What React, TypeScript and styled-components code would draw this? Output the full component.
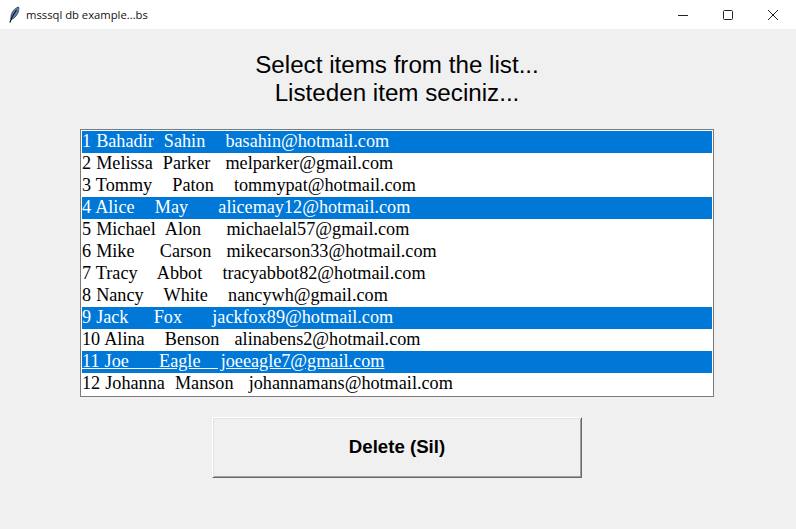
import React from "react";
import styled, { createGlobalStyle } from "styled-components";

const people = [
	{ text: "1 Bahadir  Sahin    basahin@hotmail.com", selected: true },
	{ text: "2 Melissa  Parker   melparker@gmail.com" },
	{ text: "3 Tommy    Paton    tommypat@hotmail.com" },
	{ text: "4 Alice    May      alicemay12@hotmail.com", selected: true },
	{ text: "5 Michael  Alon     michaelal57@gmail.com" },
	{ text: "6 Mike     Carson   mikecarson33@hotmail.com" },
	{ text: "7 Tracy    Abbot    tracyabbot82@hotmail.com" },
	{ text: "8 Nancy    White    nancywh@gmail.com" },
	{ text: "9 Jack     Fox      jackfox89@hotmail.com", selected: true },
	{ text: "10 Alina    Benson   alinabens2@hotmail.com" },
	{ text: "11 Joe      Eagle    joeeagle7@gmail.com", selected: true, active: true },
	{ text: "12 Johanna  Manson   johannamans@hotmail.com" },
];

export default function App() {
	return (
		<Root>
			<GlobalStyle />
			<TitleBar>
				<Feather width="16" height="18" viewBox="0 0 16 18">
					<path d="M12.5 1 C8.5 2.5 5.5 6 5 10.5 L4.8 13.5 C8 13 11 9.5 12.2 6 C12.9 4 13 2.3 12.5 1 Z" fill="#5f86bb" stroke="#2c3c52" strokeWidth="0.9" />
					<path d="M10.5 4 C8 7.5 5.5 11.5 3.8 16.5" fill="none" stroke="#111" strokeWidth="1.2" />
				</Feather>
				<WindowTitle>msssql db example...bs</WindowTitle>
				<WindowControls>
					<ControlButton>
						<svg width="12" height="12" viewBox="0 0 12 12">
							<path d="M1 6.5 H11" stroke="#222" strokeWidth="1" />
						</svg>
					</ControlButton>
					<ControlButton>
						<svg width="12" height="12" viewBox="0 0 12 12">
							<rect x="1.5" y="1.5" width="9" height="9" rx="1" fill="none" stroke="#222" strokeWidth="1" />
						</svg>
					</ControlButton>
					<ControlButton>
						<svg width="12" height="12" viewBox="0 0 12 12">
							<path d="M1 1 L11 11 M11 1 L1 11" stroke="#222" strokeWidth="1" />
						</svg>
					</ControlButton>
				</WindowControls>
			</TitleBar>
			<Content>
				<Heading>
					Select items from the list...
					<br />
					Listeden item seciniz...
				</Heading>
				<ListBox>
					{people.map((p) => (
						<ListRow key={p.text} $selected={p.selected} $active={p.active}>
							<span>{p.text}</span>
						</ListRow>
					))}
				</ListBox>
				<DeleteButton>Delete (Sil)</DeleteButton>
			</Content>
		</Root>
	);
}

const GlobalStyle = createGlobalStyle`
	html, body {
		margin: 0;
		padding: 0;
		background: #f0f0f0;
	}
`;

const Root = styled.div`
	width: 796px;
	height: 529px;
	overflow: hidden;
	display: flex;
	flex-direction: column;
	background: #f0f0f0;
`;

const TitleBar = styled.div`
	height: 29px;
	flex: none;
	display: flex;
	align-items: center;
	background: #fff;
	padding-left: 6px;
`;

const Feather = styled.svg`
	flex: none;
`;

const WindowTitle = styled.span`
	margin-left: 4px;
	font: 11.25px "Open Sans", "Liberation Sans", sans-serif;
	color: #111;
`;

const WindowControls = styled.div`
	display: flex;
	margin-left: auto;
	margin-right: 1px;
`;

const ControlButton = styled.div`
	width: 45px;
	height: 29px;
	display: flex;
	align-items: center;
	justify-content: center;
`;

const Content = styled.div`
	flex: 1;
	display: flex;
	flex-direction: column;
	align-items: center;
	padding-top: 22px;
	padding-right: 2px;
`;

const Heading = styled.div`
	font: 24.2px/28px "Liberation Sans", Arial, sans-serif;
	color: #000;
	text-align: center;
	white-space: pre;
`;

const ListBox = styled.div`
	width: 634px;
	height: 268px;
	box-sizing: border-box;
	margin-top: 22px;
	padding: 1px;
	border: 1px solid #7a7a7a;
	background: #fff;
`;

const ListRow = styled.div<{ $selected?: boolean; $active?: boolean }>`
	height: 22px;
	line-height: 20px;
	font-family: "Liberation Serif", "Times New Roman", serif;
	font-size: 18.2px;
	word-spacing: 0.5px;
	white-space: pre;
	background: ${(p) => (p.$selected ? "#0078d7" : "#fff")};
	color: ${(p) => (p.$selected ? "#fff" : "#000")};
	span {
		text-decoration: ${(p) => (p.$active ? "underline" : "none")};
	}
`;

const DeleteButton = styled.button`
	width: 370px;
	height: 61px;
	margin-top: 20px;
	padding: 0 0 2px;
	box-sizing: border-box;
	background: #f0f0f0;
	border: 1px solid;
	border-color: #fff #696969 #696969 #fff;
	box-shadow: inset 1px 1px 0 #e3e3e3, inset -1px -1px 0 #a0a0a0;
	border-radius: 0;
	font: bold 18.67px "Liberation Sans", Arial, sans-serif;
	color: #000;
`;
